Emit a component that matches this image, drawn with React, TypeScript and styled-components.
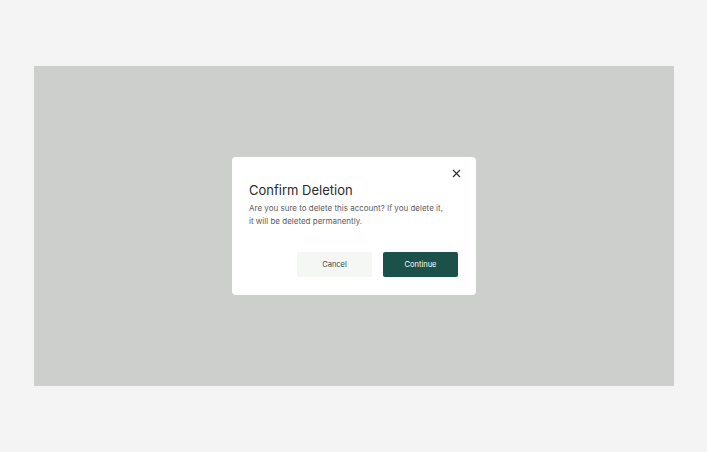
import React from 'react';
import styled, { createGlobalStyle } from 'styled-components';

const GlobalStyle = createGlobalStyle`
  html, body {
    margin: 0;
    padding: 0;
    background: #f4f4f4;
    font-family: Inter, "Noto Sans", sans-serif;
  }
`;

const Page = styled.div`
  width: 707px;
  height: 452px;
  padding: 66px 0 0 34px;
  box-sizing: border-box;
`;

const Backdrop = styled.div`
  width: 640px;
  height: 320px;
  background: #cdcfcd;
  display: flex;
  align-items: center;
  justify-content: center;
`;

const Dialog = styled.div`
  width: 244px;
  box-sizing: border-box;
  background: #ffffff;
  border-radius: 4px;
  padding: 10px 18px 18px 17px;
  display: flex;
  flex-direction: column;
`;

const CloseRow = styled.div`
  display: flex;
  justify-content: flex-end;
`;

const CloseButton = styled.button`
  border: none;
  background: none;
  padding: 0;
  width: 12px;
  height: 12px;
  margin-right: -4px;
  display: flex;
  align-items: center;
  justify-content: center;
  color: #2b2b2b;
  cursor: pointer;
`;

const Title = styled.h2`
  margin: 2px 0 0;
  font-size: 13px;
  font-weight: 400;
  color: #2a2a2a;
  line-height: 18px;
`;

const Message = styled.p`
  margin: 3px 0 0;
  font-size: 8px;
  line-height: 13px;
  color: #5c5c5c;
`;

const Actions = styled.div`
  display: flex;
  justify-content: flex-end;
  gap: 11px;
  margin-top: 24px;
`;

const Button = styled.button<{ $primary?: boolean }>`
  width: 75px;
  height: 25px;
  border: none;
  border-radius: 2px;
  font-family: inherit;
  font-size: 7.5px;
  cursor: pointer;
  background: ${(p) => (p.$primary ? '#1b5148' : '#f5f7f5')};
  color: ${(p) => (p.$primary ? '#ffffff' : '#2d4d47')};
`;

export default function App() {
  return (
    <>
      <GlobalStyle />
      <Page>
        <Backdrop>
          <Dialog role="dialog" aria-labelledby="confirm-title">
            <CloseRow>
              <CloseButton aria-label="Close">
                <svg width="9" height="9" viewBox="0 0 9 9" fill="none" stroke="currentColor" strokeWidth="1.1">
                  <path d="M1 1l7 7M8 1L1 8" />
                </svg>
              </CloseButton>
            </CloseRow>
            <Title id="confirm-title">Confirm Deletion</Title>
            <Message>
              Are you sure to delete this account? If you delete it,
              <br />
              it will be deleted permanently.
            </Message>
            <Actions>
              <Button>Cancel</Button>
              <Button $primary>Continue</Button>
            </Actions>
          </Dialog>
        </Backdrop>
      </Page>
    </>
  );
}
